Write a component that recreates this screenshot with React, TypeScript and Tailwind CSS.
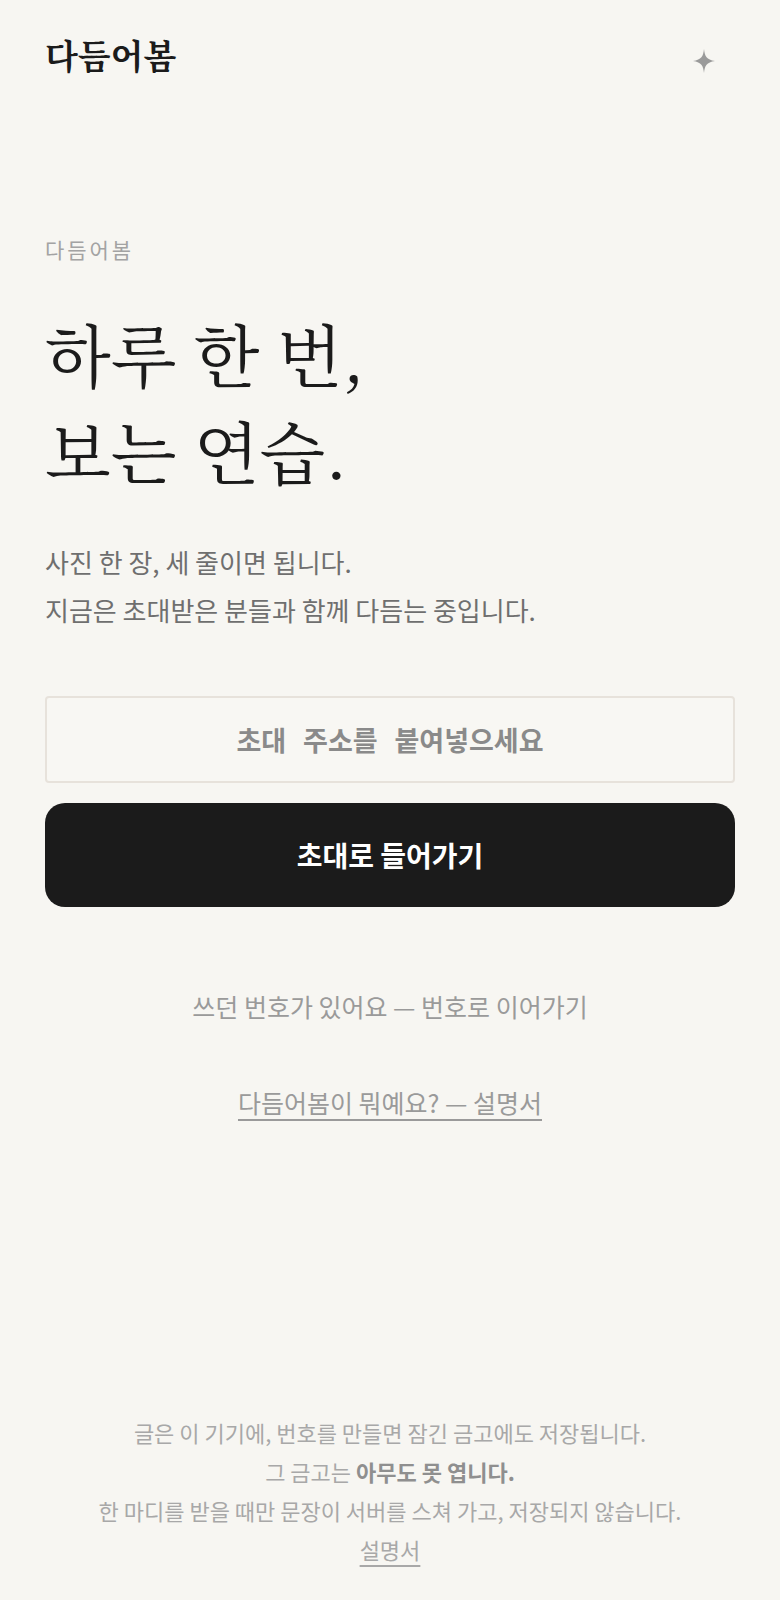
const SANS = "font-['Noto_Sans_CJK_KR','Noto_Sans',sans-serif]";
const SERIF = "font-['Noto_Serif_CJK_KR','Noto_Serif_KR','Nanum_Myeongjo',serif]";

function Sparkle() {
  return (
    <svg width="22" height="24" viewBox="0 0 22 24" fill="#9a9a9a" aria-hidden="true">
      <path d="M11 0 C11.8 7.5 13.5 10.6 22 12 C13.5 13.4 11.8 16.5 11 24 C10.2 16.5 8.5 13.4 0 12 C8.5 10.6 10.2 7.5 11 0 Z" />
    </svg>
  );
}

export default function App() {
  return (
    <div className={`flex min-h-[1600px] flex-col bg-[#f7f6f2] px-[45px] text-[#1b1b1b] ${SANS}`}>
      <header className="flex items-center justify-between pt-[30px]">
        <h1 className={`text-[34px] font-bold leading-[50px] ${SERIF}`}>다듬어봄</h1>
        <div className="mr-[20px] mt-[12px]">
          <Sparkle />
        </div>
      </header>

      <main className="mt-[154px]">
        <p className="text-[21px] leading-[30px] tracking-[0.14em] text-[#a3a3a3]">다듬어봄</p>

        <h2 className={`mt-[40px] text-[68px] leading-[97px] ${SERIF}`}>
          하루 한 번,
          <br />
          보는 연습.
        </h2>

        <div className="mt-[40px] text-[26px] leading-[48px] text-[#6f6f6f]">
          <p>사진 한 장, 세 줄이면 됩니다.</p>
          <p>지금은 초대받은 분들과 함께 다듬는 중입니다.</p>
        </div>

        <form className="mt-[62px] flex flex-col gap-[20px]" onSubmit={(e) => e.preventDefault()}>
          <input
            type="text"
            placeholder="초대 주소를 붙여넣으세요"
            className="h-[87px] w-full rounded-[4px] border-2 border-[#e7e2db] bg-[#f8f7f3] px-4 text-center text-[27px] font-bold text-[#555] outline-none [word-spacing:0.4em] placeholder:text-[#8a8a8a]"
          />
          <button
            type="submit"
            className="h-[104px] w-full rounded-[20px] bg-[#1b1b1b] text-[28px] font-bold text-white"
          >
            초대로 들어가기
          </button>
        </form>

        <div className="mt-[81px] flex flex-col items-center text-[25px] text-[#9a9a9a]">
          <p>쓰던 번호가 있어요 — 번호로 이어가기</p>
          <a href="#" className="mt-[58px] underline decoration-2 underline-offset-[6px]">
            다듬어봄이 뭐예요? — 설명서
          </a>
        </div>
      </main>

      <footer className="mt-auto pb-[31px] text-center text-[22px] leading-[39px] text-[#a8a8a8]">
        <p>글은 이 기기에, 번호를 만들면 잠긴 금고에도 저장됩니다.</p>
        <p>
          그 금고는 <strong className="font-bold text-[#8f8f8f]">아무도 못 엽니다.</strong>
        </p>
        <p>한 마디를 받을 때만 문장이 서버를 스쳐 가고, 저장되지 않습니다.</p>
        <a href="#" className="underline decoration-2 underline-offset-[6px]">
          설명서
        </a>
      </footer>
    </div>
  );
}
